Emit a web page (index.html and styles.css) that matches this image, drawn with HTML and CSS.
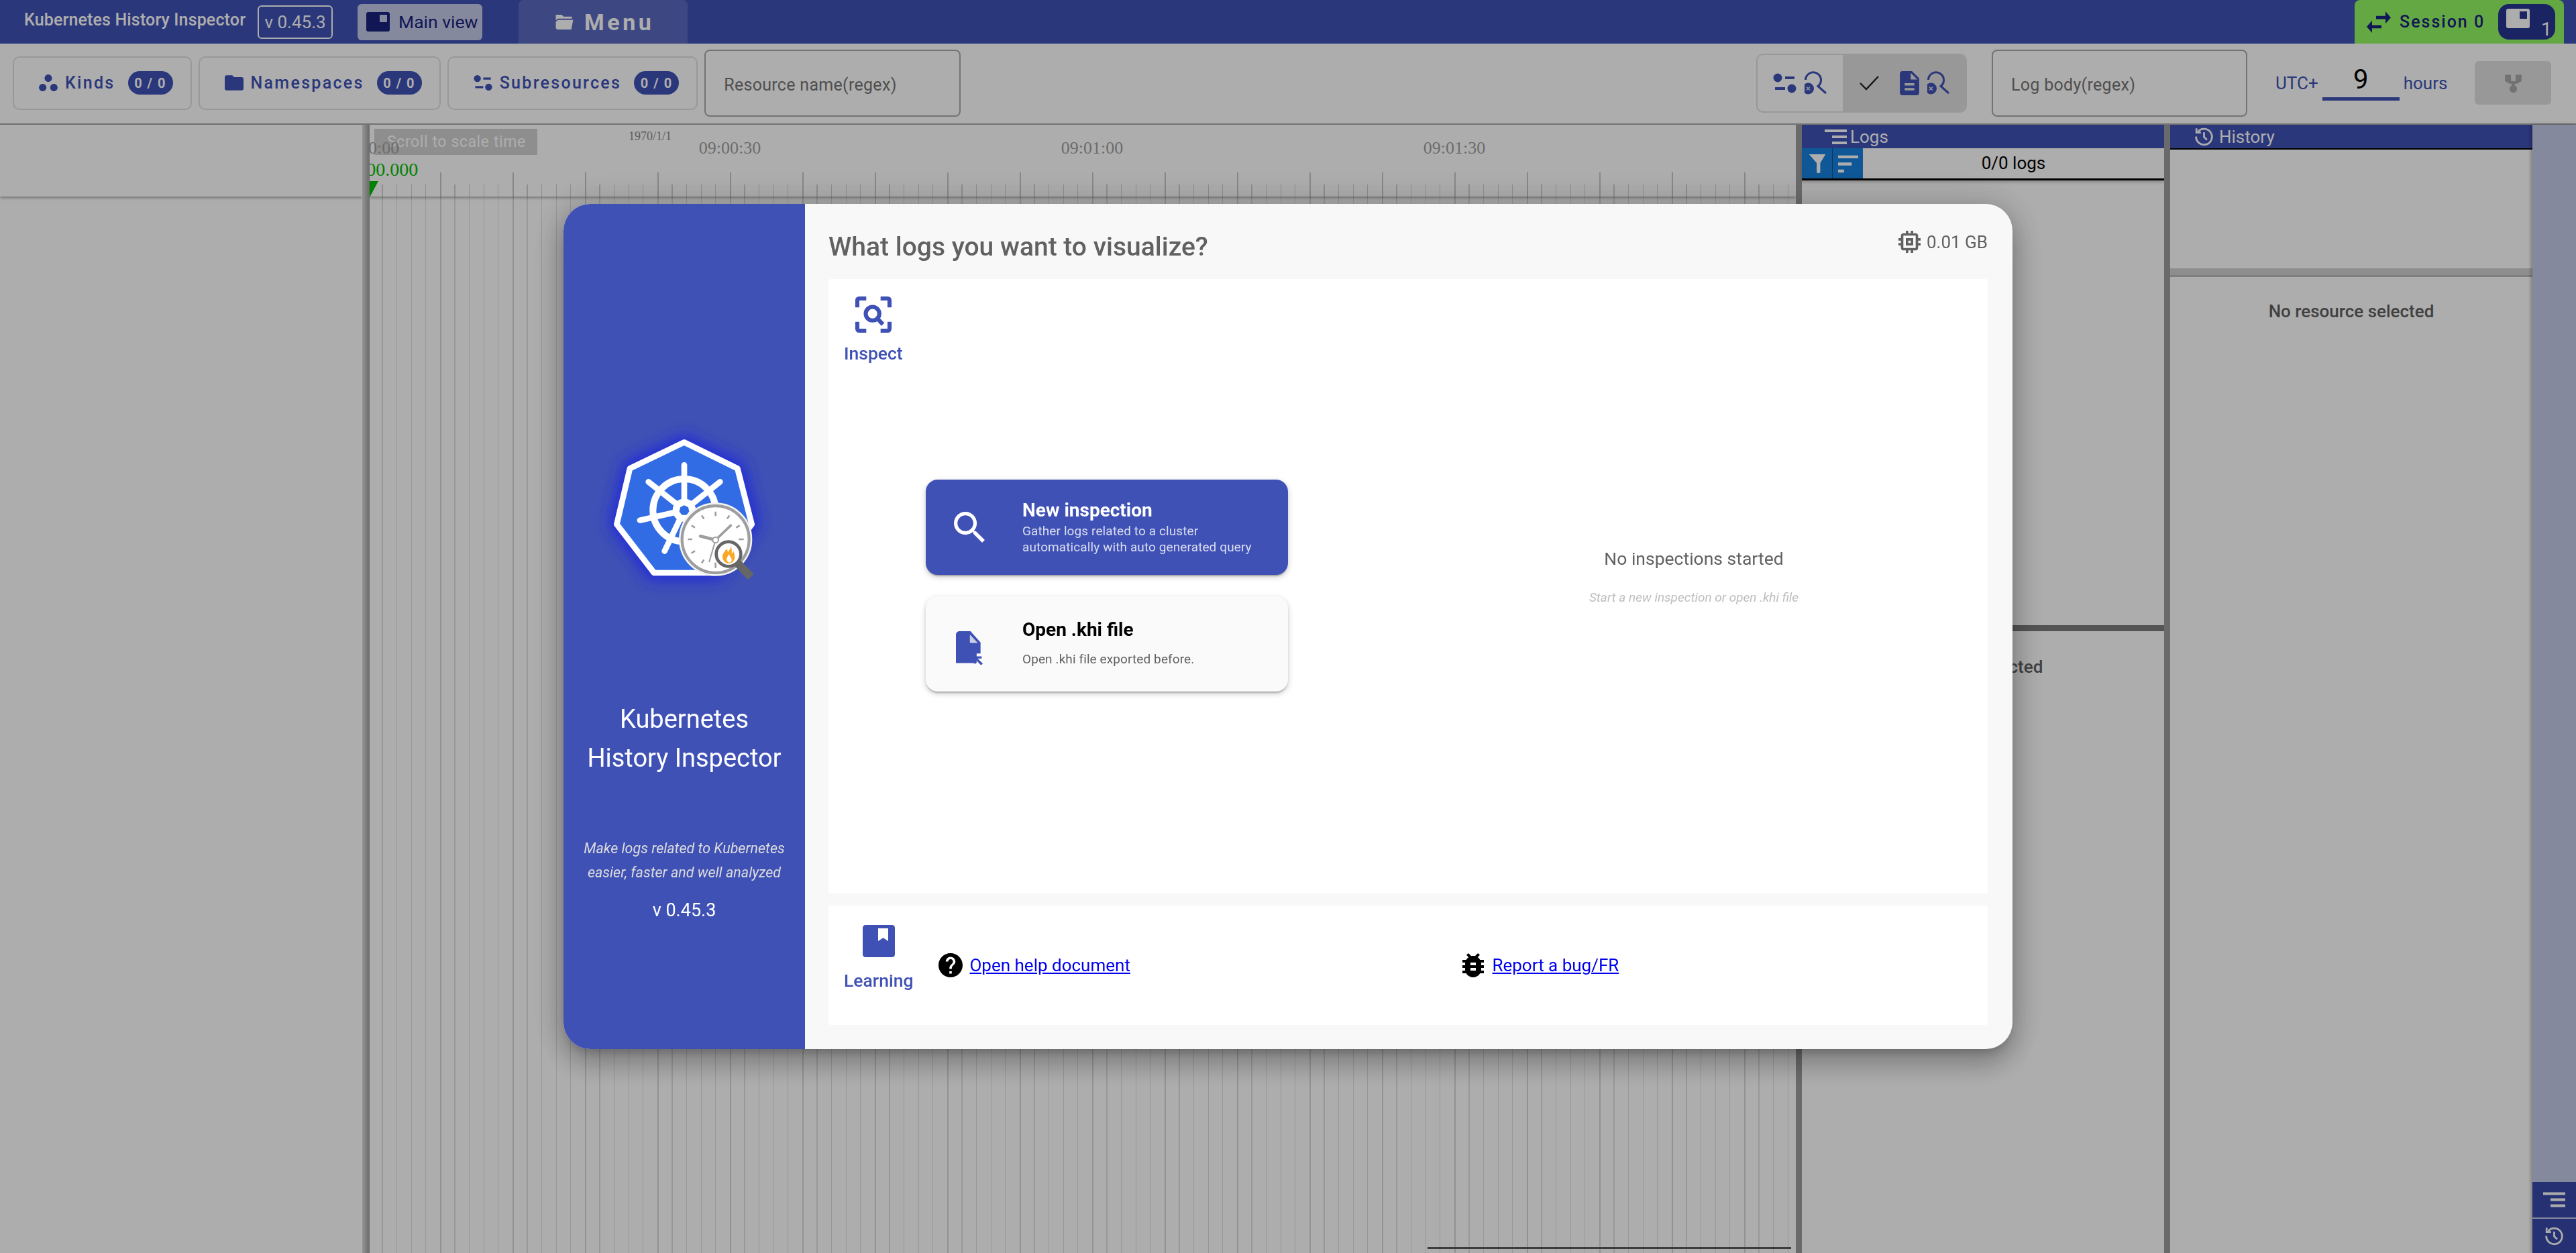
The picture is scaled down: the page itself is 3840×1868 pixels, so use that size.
FILE: index.html
```html
<!DOCTYPE html>
<html>

<head>
  <meta charset="utf-8">
  <title>Kubernetes History Inspector</title>
  <link rel="stylesheet" href="styles.css">
</head>

<body>
  <div id="page">
    <!-- Title bar -->
    <header class="topbar">
      <span class="app-name">Kubernetes History Inspector</span>
      <span class="version-box">v 0.45.3</span>
      <button class="main-view">
        <svg class="tab-icon" viewBox="0 0 35 29"><rect width="35" height="29" rx="3" fill="#1a237e"/><rect x="20" y="4" width="11" height="11" fill="#c5cae9"/></svg>
        Main view
      </button>
      <div class="menu-tab">
        <svg class="menu-icon" viewBox="2 5 27 23"><path fill="#fff" d="M2 5h9l3 3h13v3H5L2 14zM2 26V16l3-3h24l-3 15H4z"/></svg>
        Menu
      </div>
      <div class="session">
        <svg class="swap-icon" viewBox="3 5 18 14" preserveAspectRatio="none"><path d="M6.99 11 3 15l3.99 4v-3H14v-2H6.99v-3zM21 9l-3.99-4v3H10v2h7.01v3L21 9z"/></svg>
        <span class="session-name">Session 0</span>
        <div class="session-tabs">
          <svg class="tab-icon" viewBox="0 0 35 29"><rect width="35" height="29" rx="3" fill="#fff"/><rect x="20" y="4" width="11" height="11" fill="#283593"/></svg>
          <span class="tab-count">1</span>
        </div>
      </div>
    </header>

    <!-- Filters -->
    <div class="toolbar">
      <button class="chip">
        <svg class="chip-icon" viewBox="2 3 20 18"><path d="M6 13c-2.2 0-4 1.8-4 4s1.8 4 4 4 4-1.8 4-4-1.8-4-4-4zm12 0c-2.2 0-4 1.8-4 4s1.8 4 4 4 4-1.8 4-4-1.8-4-4-4zM12 3C9.8 3 8 4.8 8 7s1.8 4 4 4 4-1.8 4-4-1.8-4-4-4z"/></svg>
        <span class="chip-label">Kinds</span><span class="badge">0 / 0</span>
      </button>
      <button class="chip">
        <svg class="chip-icon" viewBox="2 4 20 16"><path d="M10 4H4c-1.1 0-1.99.9-1.99 2L2 18c0 1.1.9 2 2 2h16c1.1 0 2-.9 2-2V8c0-1.1-.9-2-2-2h-8l-2-2z"/></svg>
        <span class="chip-label">Namespaces</span><span class="badge">0 / 0</span>
      </button>
      <button class="chip">
        <svg class="chip-icon" viewBox="0 0 35 30"><circle cx="7" cy="7" r="6.500"/><rect x="18" y="5" width="14" height="4"/><rect x="3" y="21" width="15" height="4"/><circle cx="28" cy="23" r="6.500"/></svg>
        <span class="chip-label">Subresources</span><span class="badge">0 / 0</span>
      </button>
      <div class="text-filter resource-filter">Resource name(regex)</div>

      <div class="toggle-group">
        <div class="toggle">
          <svg class="switch-icon" viewBox="0 0 35 30"><circle cx="7" cy="7" r="6.500"/><rect x="18" y="5" width="14" height="4"/><rect x="3" y="21" width="15" height="4"/><circle cx="28" cy="23" r="6.500"/></svg>
          <svg class="lens-icon" viewBox="0 0 33 35"><path class="lens-line" d="M1.500 13A11.500 11.500 0 1 1 20 22.500L32 33"/><circle cx="5.500" cy="26" r="8.500"/><path class="x-mark" d="M3 23.500l5 5M8 23.500l-5 5"/></svg>
        </div>
        <div class="toggle selected">
          <svg class="check-icon" viewBox="0 0 30 22"><path d="M1 11l9 9L28 1"/></svg>
          <svg class="doc-icon" viewBox="4 2 16 20"><path d="M14 2H6c-1.100 0-1.990.900-1.990 2L4 20c0 1.100.890 2 1.990 2H18c1.100 0 2-.900 2-2V8l-6-6zm2 16H8v-2h8v2zm0-4H8v-2h8v2zm-3-5V3.500L18.500 9H13z"/></svg>
          <svg class="lens-icon" viewBox="0 0 33 35"><path class="lens-line" d="M1.500 13A11.500 11.500 0 1 1 20 22.500L32 33"/><circle cx="5.500" cy="26" r="8.500"/><path class="x-mark" d="M3 23.500l5 5M8 23.500l-5 5"/></svg>
        </div>
      </div>
      <div class="text-filter log-filter">Log body(regex)</div>
      <div class="utc">
        <span>UTC+</span>
        <span class="utc-value">9</span>
        <span>hours</span>
      </div>
      <button class="graph-button">
        <svg class="graph-icon" viewBox="0 0 24 36" preserveAspectRatio="none"><path d="M1 2h8v12h6V2h8v12l-6 5h-3v4h-4v-4H7l-6-5z"/><ellipse cx="12" cy="29" rx="5" ry="7"/></svg>
      </button>
    </div>

    <main class="workspace">
      <!-- Timeline -->
      <section class="timeline">
        <div class="names">
          <div class="names-head"></div>
        </div>
        <div class="timeline-split"></div>
        <div class="tracks">
          <div class="ruler">
            <span class="ruler-tip">Scroll to scale time</span>
            <span class="ruler-time time-0">09:00:00</span>
            <span class="ruler-time time-1">09:00:30</span>
            <span class="ruler-time time-2">09:01:00</span>
            <span class="ruler-time time-3">09:01:30</span>
            <span class="ruler-date">1970/1/1</span>
            <span class="ruler-now">09:00:00.000</span>
            <span class="ruler-marker"></span>
          </div>
          <div class="track-lines"></div>
          <div class="track-scroll"></div>
        </div>
      </section>

      <!-- Logs -->
      <section class="pane">
        <div class="pane-head logs-head">
          <svg class="pane-icon" viewBox="0 0 33 24"><path d="M0 1h33v4H0zM11 10h22v4H11zM11 19h22v4H11z"/></svg>
          Logs
        </div>
        <div class="logs-sub">
          <div class="filter-buttons">
            <button class="filter-button">
              <svg viewBox="0 0 28 34"><path d="M0 1h28l-9 15v15c0 3-6 3-6 0V16z"/></svg>
            </button>
            <button class="filter-button">
              <svg viewBox="0 0 34 34"><path d="M0 3h34v5H0zM0 15h23v5H0zM0 27h10v5H0z"/></svg>
            </button>
          </div>
          <span class="logs-count">0/0 logs</span>
        </div>
        <div class="logs-list"></div>
        <div class="logs-split"></div>
        <div class="empty-note logs-note">No resource selected</div>
      </section>

      <!-- History -->
      <section class="pane">
        <div class="pane-head history-head">
          <svg class="pane-icon history-icon" viewBox="0 0 24 24"><path class="history-line" d="M5.600 6.600A8.600 8.600 0 1 1 3.400 12M12 7.500v5l3.200 3.200"/><path class="history-line" d="M3.800 3v4.800h4.800"/></svg>
          History
        </div>
        <div class="history-list"></div>
        <div class="history-split"></div>
        <div class="empty-note history-note">No resource selected</div>
      </section>

      <aside class="rail">
        <button class="rail-button">
          <svg viewBox="0 0 33 24"><path d="M0 1h33v4H0zM11 10h22v4H11zM11 19h22v4H11z"/></svg>
        </button>
        <button class="rail-button">
          <svg viewBox="0 0 24 24"><path class="history-line" d="M5.600 6.600A8.600 8.600 0 1 1 3.400 12M12 7.500v5l3.200 3.200"/><path class="history-line" d="M3.800 3v4.800h4.800"/></svg>
        </button>
      </aside>
    </main>
  </div>

  <!-- Startup dialog -->
  <div class="backdrop">
    <div class="dialog">
      <div class="dialog-side">
        <svg class="logo" viewBox="0 0 1080 900">
          <defs>
            <filter id="glow" x="-40%" y="-40%" width="180%" height="180%">
              <feGaussianBlur stdDeviation="32"/>
            </filter>
          </defs>
          <polygon points="540,165 790,285 855,545 690,775 395,775 225,545 285,285" fill="#2329d8" stroke="#2329d8" stroke-width="40" filter="url(#glow)"/>
          <polygon points="540,178 778,295 842,545 680,762 405,762 238,545 297,295" fill="#326ce5" stroke="#fff" stroke-width="26" stroke-linejoin="round"/>
          <g fill="none" stroke="#fff">
            <circle cx="540" cy="482" r="140" stroke-width="30"/>
            <g stroke-width="26" stroke-linecap="round">
              <path d="M540 482V280"/>
              <path d="M540 482L700 355"/>
              <path d="M540 482L740 527"/>
              <path d="M540 482L628 665"/>
              <path d="M540 482L452 665"/>
              <path d="M540 482L342 527"/>
              <path d="M540 482L380 355"/>
            </g>
          </g>
          <circle cx="540" cy="482" r="52" fill="#fff"/>
          <polygon points="540,460 558,469 562,488 550,503 530,503 518,488 522,469" fill="#326ce5"/>
          <circle cx="680" cy="612" r="162" fill="#fff" stroke="#eee" stroke-width="4"/>
          <circle cx="680" cy="612" r="150" fill="#fff" stroke="#9e9e9e" stroke-width="13"/>
          <g stroke="#9e9e9e" stroke-width="8">
            <path d="M680 488v20M680 716v24M556 612h20M784 612h22M618 505l10 16M742 505l-10 16M572 550l16 10M788 550l-16 10M572 674l16-10M618 719l10-16"/>
          </g>
          <g stroke="#9e9e9e" stroke-linecap="round">
            <path d="M612 598L680 615" stroke-width="14"/>
            <path d="M680 615L748 550" stroke-width="11"/>
            <path d="M680 615L652 712" stroke-width="6"/>
          </g>
          <circle cx="680" cy="615" r="13" fill="#fff" stroke="#9e9e9e" stroke-width="6"/>
          <path d="M780 720L838 780" stroke="#666" stroke-width="36"/>
          <circle cx="738" cy="678" r="55" fill="#fff" stroke="#666" stroke-width="14"/>
          <path d="M748 632c6 18-6 24-12 38-4-6-3-12-5-16-14 14-22 28-20 40 2 14 14 26 28 26s26-12 27-26c1-10-4-20-6-30-2 6-4 10-8 12 2-18-2-34-4-44z" fill="#f9a825"/>
          <path d="M740 678c-4 10-12 16-10 26 2 8 8 12 12 12s12-6 10-14c-1-8-8-12-12-24z" fill="#fff"/>
        </svg>
        <h1 class="side-title">Kubernetes<br>History Inspector</h1>
        <p class="side-tag">Make logs related to Kubernetes<br>easier, faster and well analyzed</p>
        <p class="side-version">v 0.45.3</p>
      </div>

      <div class="dialog-main">
        <div class="dialog-head">
          <h2 class="dialog-title">What logs you want to visualize?</h2>
          <div class="memory">
            <svg class="memory-icon" viewBox="3 3 18 18"><path d="M15 9H9v6h6V9zm-2 4h-2v-2h2v2zm8-2V9h-2V7c0-1.100-.900-2-2-2h-2V3h-2v2h-2V3H9v2H7c-1.100 0-2 .900-2 2v2H3v2h2v2H3v2h2v2c0 1.100.900 2 2 2h2v2h2v-2h2v2h2v-2h2c1.100 0 2-.900 2-2v-2h2v-2h-2v-2h2zm-4 6H7V7h10v10z"/></svg>
            0.01 GB
          </div>
        </div>

        <div class="panel inspect-panel">
          <div class="panel-label">
            <svg class="label-icon" viewBox="0 0 24 24"><path class="frame-line" d="M3 8V4a1 1 0 0 1 1-1h4M16 3h4a1 1 0 0 1 1 1v4M21 16v4a1 1 0 0 1-1 1h-4M8 21H4a1 1 0 0 1-1-1v-4"/><circle class="frame-line" cx="11.500" cy="11.500" r="3.800"/><path class="frame-line" d="M14.300 14.300l3 3.200"/></svg>
            <span>Inspect</span>
          </div>
          <div class="inspect-body">
            <div class="actions">
              <button class="action primary">
                <svg class="action-icon" viewBox="3 3 17.500 17.500"><path d="M15.500 14h-.790l-.280-.270C15.410 12.590 16 11.110 16 9.500 16 5.910 13.090 3 9.500 3S3 5.910 3 9.500 5.910 16 9.500 16c1.610 0 3.090-.590 4.230-1.570l.270.280v.790l5 4.990L20.490 19l-4.990-5zm-6 0C7.010 14 5 11.990 5 9.500S7.010 5 9.500 5 14 7.010 14 9.500 11.990 14 9.500 14z"/></svg>
                <span class="action-text">
                  <span class="action-title">New inspection</span>
                  <span class="action-sub">Gather logs related to a cluster<br>automatically with auto generated query</span>
                </span>
              </button>
              <button class="action">
                <svg class="action-icon file-icon" viewBox="0 0 48 60"><path d="M6 0h20l18 20v20h-7v17H0V6c0-3 3-6 6-6z"/><path fill="#fafafa" d="M25 6v15h14z" opacity=".75"/><path d="M32 45h14v4h-7l9 9-3 3-9-9v6h-4z"/></svg>
                <span class="action-text open-text">
                  <span class="action-title">Open .khi file</span>
                  <span class="action-sub spaced">Open .khi file exported before.</span>
                </span>
              </button>
            </div>
            <div class="no-inspections">
              <p class="none-title">No inspections started</p>
              <p class="none-hint">Start a new inspection or open .khi file</p>
            </div>
          </div>
        </div>

        <div class="panel learning-panel">
          <div class="panel-label learning-label">
            <svg class="book-icon" viewBox="0 0 48 48"><path fill-rule="evenodd" d="M4 0h40c2.200 0 4 1.800 4 4v40c0 2.200-1.800 4-4 4H4c-2.200 0-4-1.800-4-4V4c0-2.200 1.800-4 4-4zM23 5v19l7.500-5 7.500 5V5z"/></svg>
            <span>Learning</span>
          </div>
          <div class="help-link help-first">
            <svg class="help-icon" viewBox="2 2 20 20"><path d="M12 2C6.480 2 2 6.480 2 12s4.480 10 10 10 10-4.480 10-10S17.520 2 12 2zm1 17h-2v-2h2v2zm2.070-7.750-.900.920C13.450 12.900 13 13.500 13 15h-2v-.500c0-1.100.450-2.100 1.170-2.830l1.240-1.260c.370-.360.590-.860.590-1.410 0-1.100-.900-2-2-2s-2 .900-2 2H8c0-2.210 1.790-4 4-4s4 1.790 4 4c0 .880-.360 1.680-.930 2.250z"/></svg>
            <a href="#">Open help document</a>
          </div>
          <div class="help-link">
            <svg class="help-icon" viewBox="4 3 16 18"><path d="M20 8h-2.810c-.450-.780-1.070-1.450-1.820-1.960L17 4.410 15.590 3l-2.170 2.170C12.960 5.060 12.490 5 12 5c-.490 0-.960.060-1.410.170L8.410 3 7 4.410l1.620 1.630C7.880 6.550 7.260 7.220 6.810 8H4v2h2.090c-.050.330-.090.660-.090 1v1H4v2h2v1c0 .340.040.670.090 1H4v2h2.810c1.040 1.790 2.970 3 5.190 3s4.150-1.210 5.190-3H20v-2h-2.090c.050-.330.090-.660.090-1v-1h2v-2h-2v-1c0-.340-.040-.670-.090-1H20V8zm-6 8h-4v-2h4v2zm0-4h-4v-2h4v2z"/></svg>
            <a href="#">Report a bug/FR</a>
          </div>
        </div>
      </div>
    </div>
  </div>
</body>

</html>
```

FILE: styles.css
```css
/* Variables */
:root {
  --indigo: #3f51b5;
  --indigo-light: #c5cae9;
  --navy: #1a237e;
  --divider: #9d9d9d;
}

/* Boiler Plate */
*, ::after, ::before {
  box-sizing: border-box;
  margin: 0;
  padding: 0;
}
html, body {
  height: 100%;
}
body {
  font-family: "Roboto", "Liberation Sans", sans-serif;
  font-size: 26px;
  background: #fff;
  color: #000;
  overflow: hidden;
}
button {
  font: inherit;
  border: none;
  background: none;
}
svg {
  display: block;
  flex: none;
}
#page {
  height: 100%;
  display: flex;
  flex-direction: column;
}

/* Title bar */
.topbar {
  height: 65px;
  flex: none;
  display: flex;
  align-items: center;
  background: var(--indigo);
  color: #fff;
  padding: 0 18px 0 36px;
}
.app-name {
  width: 329px;
  flex: none;
  font-size: 25px;
  font-weight: 500;
  letter-spacing: 0.15px;
  white-space: nowrap;
  margin-top: -7px;
}
.version-box {
  width: 112px;
  height: 50px;
  margin-left: 19px;
  border: 2px solid #fff;
  border-radius: 6px;
  display: flex;
  align-items: center;
  justify-content: center;
}
.main-view {
  width: 186px;
  height: 54px;
  margin-left: 37px;
  display: flex;
  align-items: center;
  gap: 13px;
  padding-left: 13px;
  border-radius: 6px;
  background: var(--indigo-light);
  color: var(--navy);
  font-size: 26.5px;
  white-space: nowrap;
}
.tab-icon {
  width: 35px;
  height: 29px;
}
.menu-tab {
  width: 252px;
  height: 65px;
  margin-left: 54px;
  display: flex;
  align-items: center;
  gap: 15px;
  padding-left: 54px;
  border-radius: 8px 8px 0 0;
  background: rgb(255 255 255 / 15%);
  font-size: 34px;
  font-weight: 700;
  letter-spacing: 4.5px;
}
.menu-icon {
  width: 29px;
  height: 22px;
}
.session {
  width: 312px;
  height: 65px;
  margin-left: auto;
  display: flex;
  align-items: center;
  padding-left: 18px;
  border-radius: 8px 8px 0 0;
  background: #94f864;
  color: var(--navy);
}
.swap-icon {
  width: 36px;
  height: 32px;
  fill: var(--navy);
}
.session-name {
  width: 147px;
  flex: none;
  margin-left: 13px;
  font-size: 25px;
  font-weight: 500;
  letter-spacing: 2px;
  white-space: nowrap;
}
.session-tabs {
  width: 85px;
  height: 53px;
  display: flex;
  padding: 7px 0 0 12px;
  border-radius: 16px;
  background: #283593;
  color: #fff;
}
.tab-count {
  margin: 16px 0 0 17px;
  font-size: 28px;
  line-height: 30px;
}

/* Toolbar */
.toolbar {
  height: 121px;
  flex: none;
  display: flex;
  align-items: center;
  padding: 0 37px 2px 19px;
  border-bottom: 2px solid #aaa;
}
.chip {
  height: 80px;
  display: flex;
  align-items: center;
  padding: 0 26px 0 37px;
  margin-right: 10px;
  border: 2px solid #e0e0e0;
  border-radius: 10px;
  color: var(--indigo);
  font-size: 25px;
  font-weight: 500;
}
.chip-icon {
  width: 28px;
  height: 25px;
  fill: var(--indigo);
}
.chip-label {
  margin-left: 11px;
  letter-spacing: 2.3px;
}
.badge {
  width: 67px;
  height: 35px;
  margin-left: 19px;
  display: flex;
  align-items: center;
  justify-content: center;
  border-radius: 18px;
  background: var(--indigo);
  color: #fff;
  font-size: 20px;
  letter-spacing: 1.5px;
  font-weight: 700;
}
.text-filter {
  height: 100px;
  display: flex;
  align-items: center;
  padding-left: 27px;
  padding-top: 6px;
  border: 2px solid #aaa;
  border-radius: 8px;
  color: #757575;
  font-size: 25px;
  letter-spacing: 0.3px;
}
.resource-filter {
  width: 382px;
}
.toggle-group {
  width: 314px;
  height: 88px;
  margin-left: auto;
  display: flex;
  border: 2px solid #e0e0e0;
  border-radius: 10px;
  overflow: hidden;
}
.toggle {
  width: 127px;
  flex: none;
  display: flex;
  align-items: center;
  gap: 12px;
  padding-left: 23px;
}
.toggle.selected {
  flex: 1;
  padding-left: 25px;
  background: #e0e0e0;
}
.switch-icon {
  width: 35px;
  height: 30px;
  fill: var(--indigo);
}
.lens-icon {
  width: 33px;
  height: 35px;
  fill: var(--indigo);
}
.lens-line {
  fill: none;
  stroke: var(--indigo);
  stroke-width: 3;
}
.x-mark {
  fill: none;
  stroke: #ddd;
  stroke-width: 1.6;
}
.check-icon {
  width: 30px;
  height: 22px;
  margin-right: 18px;
  fill: none;
  stroke: #222;
  stroke-width: 2.4;
}
.doc-icon {
  width: 29px;
  height: 36px;
  fill: var(--indigo);
}
.log-filter {
  width: 381px;
  margin-left: 37px;
}
.utc {
  width: 255px;
  margin-left: 42px;
  display: flex;
  align-items: center;
  color: var(--indigo);
  white-space: nowrap;
}
.utc-value {
  width: 115px;
  height: 56px;
  flex: none;
  margin: 0 6px 0 6px;
  text-align: center;
  color: #000;
  font-size: 40px;
  line-height: 50px;
  border-bottom: 5px solid var(--indigo);
  position: relative;
  top: -2px;
}
.graph-button {
  width: 114px;
  height: 65px;
  margin-left: 42px;
  display: flex;
  align-items: center;
  justify-content: center;
  border-radius: 6px;
  background: #e0e0e0;
}
.graph-icon {
  width: 27px;
  height: 28px;
  fill: #a8a8a8;
}

/* Panes */
.workspace {
  flex: 1;
  min-height: 0;
  display: flex;
}
.timeline {
  flex: 1;
  display: flex;
}
.names {
  width: 540px;
  flex: none;
}
.names-head {
  height: 107px;
  box-shadow: 0 2px 4px rgb(0 0 0 / 35%);
}
.timeline-split {
  width: 11px;
  flex: none;
  background: linear-gradient(90deg, #dcdcdc, #b4b4b4 60%, #9d9d9d);
  position: relative;
}
.tracks {
  flex: 1;
  display: flex;
  flex-direction: column;
  position: relative;
  overflow: hidden;
}
.ruler {
  height: 107px;
  flex: none;
  position: relative;
  font-family: "Liberation Serif", serif;
  background-repeat: no-repeat;
  background-position: bottom;
  background-size: 100% 36px, 100% 18px;
  background-image:
    repeating-linear-gradient(90deg, transparent 0 104.7px, #c8c8c8 104.7px 106.7px, transparent 106.7px 108px),
    repeating-linear-gradient(90deg, transparent 0 18.4px, #d2d2d2 18.4px 19.6px, transparent 19.6px 21.6px);
  box-shadow: 0 2px 4px rgb(0 0 0 / 35%);
}
.ruler-tip {
  position: absolute;
  left: 7px;
  top: 6px;
  width: 243px;
  height: 39px;
  padding-left: 19px;
  background: #d2d2d2;
  color: #fff;
  font-family: "Roboto", sans-serif;
  font-size: 23px;
  line-height: 39px;
  letter-spacing: 0.6px;
}
.ruler-time {
  position: absolute;
  top: 20px;
  width: 120px;
  text-align: center;
  font-size: 26px;
  line-height: 30px;
  color: #a0a0a0;
}
.time-0 { left: -62px; }
.time-1 { left: 477px; }
.time-2 { left: 1017px; }
.time-3 { left: 1557px; }
.ruler-date {
  position: absolute;
  left: 386px;
  top: 6px;
  font-size: 18px;
  line-height: 22px;
  color: #8a8a8a;
}
.ruler-now {
  position: absolute;
  left: -84px;
  top: 52px;
  width: 164px;
  font-size: 28px;
  line-height: 30px;
  text-align: center;
  color: #00c000;
}
.ruler-marker {
  position: absolute;
  left: -1px;
  top: 84px;
  width: 14px;
  height: 26px;
  background: #00c000;
  clip-path: polygon(0 0, 100% 0, 0 100%);
}
.track-lines {
  flex: 1;
  background-image:
    repeating-linear-gradient(90deg, transparent 0 104.7px, #d8d8d8 104.7px 106.7px, transparent 106.7px 108px),
    repeating-linear-gradient(90deg, transparent 0 18.4px, #e0e0e0 18.4px 19.6px, transparent 19.6px 21.6px);
}
.track-scroll {
  position: absolute;
  right: 7px;
  bottom: 6px;
  width: 542px;
  height: 3px;
  background: #5a5a5a;
}
.pane {
  width: 549px;
  flex: none;
  display: flex;
  flex-direction: column;
  border-left: 9px solid var(--divider);
}
.pane-head {
  height: 35px;
  flex: none;
  display: flex;
  align-items: center;
  background: var(--indigo);
  color: #fff;
  font-size: 26px;
}
.logs-head {
  padding-left: 34px;
  gap: 5px;
}
.pane-icon {
  width: 33px;
  height: 24px;
  fill: #fff;
}
.history-head {
  padding-left: 34px;
  gap: 6px;
}
.history-icon {
  width: 33px;
  height: 33px;
}
.history-line {
  fill: none;
  stroke: #fff;
  stroke-width: 2;
}
.logs-sub {
  height: 48px;
  flex: none;
  display: flex;
  border-bottom: 3px solid #000;
  box-shadow: 0 3px 4px rgb(0 0 0 / 20%);
}
.filter-buttons {
  width: 91px;
  flex: none;
  display: flex;
  background: #1780dd;
}
.filter-button {
  flex: 1;
  display: flex;
  align-items: center;
  justify-content: center;
}
.filter-button + .filter-button {
  border-left: 1px solid #114f87;
}
.filter-button svg {
  width: 30px;
  height: 30px;
  fill: #fff;
}
.logs-count {
  flex: 1;
  text-align: center;
  line-height: 44px;
}
.logs-list {
  height: 663px;
  flex: none;
}
.logs-split {
  height: 9px;
  flex: none;
  background: #7d7d7d;
}
.empty-note {
  text-align: center;
  font-weight: 500;
  color: #616161;
  line-height: 28px;
}
.logs-note {
  padding: 39px 68px 0 0;
}
.history-list {
  height: 179px;
  flex: none;
  border-top: 2px solid #000;
}
.history-split {
  height: 13px;
  flex: none;
  background: #d2d2d2;
  border-bottom: 3px solid #bbb;
}
.history-note {
  padding-top: 37px;
}
.rail {
  width: 65px;
  flex: none;
  display: flex;
  flex-direction: column;
  justify-content: flex-end;
  background: var(--indigo-light);
  box-shadow: -2px 0 5px rgb(0 0 0 / 30%);
  position: relative;
}
.rail-button {
  height: 53px;
  display: flex;
  align-items: center;
  justify-content: center;
  background: #3949ab;
}
.rail-button + .rail-button {
  border-top: 2px solid var(--indigo-light);
}
.rail-button svg {
  width: 33px;
  height: 33px;
  fill: #fff;
}

/* Startup dialog */
.backdrop {
  position: fixed;
  inset: 0;
  z-index: 10;
  display: flex;
  align-items: center;
  justify-content: center;
  background: rgb(0 0 0 / 32%);
}
.dialog {
  width: 2160px;
  height: 1260px;
  display: flex;
  border-radius: 40px;
  overflow: hidden;
  background: #f8f8f8;
  box-shadow: 0 0 60px rgb(0 0 0 / 12%), 0 11px 15px -7px rgb(0 0 0 / 20%), 0 24px 38px 3px rgb(0 0 0 / 14%), 0 9px 46px 8px rgb(0 0 0 / 12%);
}
.dialog-side {
  width: 360px;
  flex: none;
  padding-top: 296px;
  background: var(--indigo);
  color: #fff;
  text-align: center;
}
.logo {
  width: 360px;
  height: 300px;
}
.side-title {
  margin-top: 143px;
  font-size: 38px;
  font-weight: 400;
  line-height: 58px;
}
.side-tag {
  margin-top: 88px;
  font-size: 21.5px;
  font-style: italic;
  line-height: 36px;
  color: #ddd;
}
.side-version {
  margin-top: 23px;
  font-size: 27px;
  line-height: 30px;
}
.dialog-main {
  flex: 1;
  display: flex;
  flex-direction: column;
  padding: 40px 37px 0 35px;
}
.dialog-head {
  height: 72px;
  flex: none;
  display: flex;
  justify-content: space-between;
  align-items: flex-start;
}
.dialog-title {
  font-size: 39px;
  font-weight: 500;
  line-height: 48px;
  color: #616161;
}
.memory {
  display: flex;
  align-items: center;
  gap: 9px;
  line-height: 26px;
  color: #616161;
}
.memory-icon {
  width: 33px;
  height: 33px;
  fill: #616161;
}
.panel {
  flex: none;
  background: #fff;
  border-radius: 4px;
}
.inspect-panel {
  height: 916px;
  margin-bottom: 18px;
}
.learning-panel {
  height: 178px;
  display: flex;
  align-items: center;
}
.panel-label {
  width: max-content;
  padding: 21px 0 0 23px;
  display: flex;
  flex-direction: column;
  align-items: center;
  gap: 10px;
  color: var(--indigo);
  font-size: 26.5px;
  font-weight: 500;
}
.label-icon {
  width: 64px;
  height: 64px;
}
.book-icon {
  width: 48px;
  height: 48px;
  fill: var(--indigo);
}
.frame-line {
  fill: none;
  stroke: var(--indigo);
  stroke-width: 2.3;
}
.inspect-body {
  display: flex;
}
.actions {
  width: 540px;
  margin: 173px 0 0 145px;
  display: flex;
  flex-direction: column;
  gap: 32px;
}
.action {
  height: 142px;
  display: flex;
  align-items: center;
  gap: 55px;
  padding-left: 41px;
  border-radius: 18px;
  background: #fafafa;
  text-align: left;
  box-shadow: 0 3px 3px -2px rgb(0 0 0 / 40%), 0 3px 8px 0 rgb(0 0 0 / 22%);
}
.action.primary {
  background: var(--indigo);
  color: #fff;
}
.action-icon {
  width: 48px;
  height: 46px;
  fill: #fff;
}
.file-icon {
  height: 50px;
  margin-top: 12px;
  fill: var(--indigo);
}
.action-text {
  display: flex;
  flex-direction: column;
}
.open-text {
  margin-top: -4px;
}
.action-title {
  font-size: 28px;
  font-weight: 700;
  line-height: 34px;
}
.action-sub {
  margin-top: 2px;
  font-size: 19px;
  line-height: 24px;
  letter-spacing: 0.1px;
  color: rgb(255 255 255 / 80%);
}
.action-sub.spaced {
  margin-top: 15px;
  color: #616161;
}
.no-inspections {
  flex: 1;
  margin: 277px 0 0 167px;
  text-align: center;
}
.none-title {
  font-size: 26.5px;
  line-height: 28px;
  color: #616161;
}
.none-hint {
  margin-top: 34px;
  font-size: 19px;
  font-style: italic;
  line-height: 20px;
  color: #bdbdbd;
}
.learning-label {
  align-self: flex-start;
  padding-top: 29px;
  gap: 19px;
}
.help-link {
  display: flex;
  align-items: center;
  gap: 10px;
}
.help-first {
  width: 779px;
  margin-left: 38px;
}
.help-icon {
  width: 36px;
  height: 36px;
}
.help-link a {
  color: #0000ee;
}
```
